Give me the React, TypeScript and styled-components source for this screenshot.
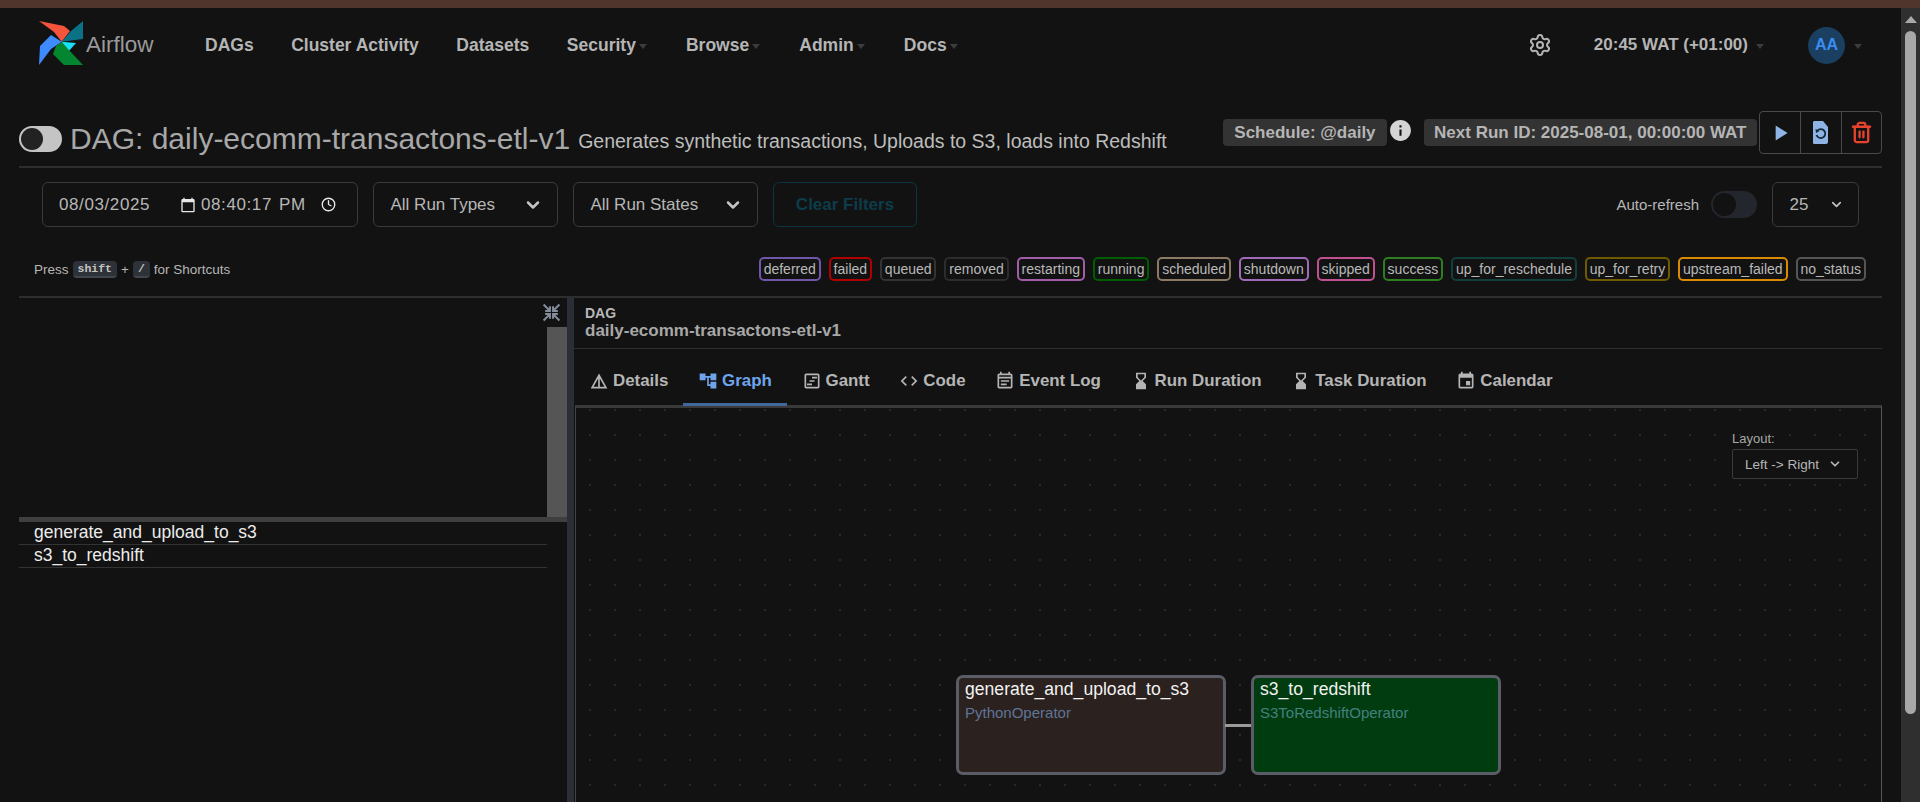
import React from 'react';
import styled, { createGlobalStyle } from 'styled-components';
import { ChevronDown, Clock, Settings, Trash2 } from 'lucide-react';
import {
  MdAccountTree,
  MdCalendarToday,
  MdCode,
  MdDetails,
  MdEvent,
  MdHourglassBottom,
  MdInfo,
  MdOutlineEventNote,
  MdOutlineViewTimeline,
  MdPlayArrow,
} from 'react-icons/md';

const GlobalStyle = createGlobalStyle`
  html, body {
    margin: 0;
    height: 100%;
    overflow: hidden;
    background: #121212;
    color: #b7b7b7;
    font-family: "Liberation Sans", Arial, sans-serif;
  }
  * { box-sizing: border-box; }
`;

const Page = styled.div`
  width: 1920px;
  height: 802px;
  display: flex;
  flex-direction: column;
  overflow: hidden;
`;

const TopStrip = styled.div`
  height: 8px;
  background: #4f352c;
  flex: none;
`;

const Body = styled.div`
  flex: 1;
  display: flex;
  min-height: 0;
`;

const Main = styled.div`
  flex: 1;
  min-width: 0;
  padding: 0 19px;
  display: flex;
  flex-direction: column;
`;

const ScrollRail = styled.div`
  width: 19px;
  flex: none;
  background: #2f2f2f;
  padding-top: 8px;
  display: flex;
  flex-direction: column;
  align-items: center;
`;

const RailArrow = styled.div`
  width: 0;
  height: 0;
  border-left: 6.5px solid transparent;
  border-right: 6.5px solid transparent;
  border-bottom: 7px solid #a8a8a8;
  margin-bottom: 8px;
`;

const RailThumb = styled.div`
  width: 11px;
  height: 683px;
  background: #a8a8a8;
  border-radius: 6px;
`;

const Navbar = styled.nav`
  height: 62px;
  flex: none;
  display: flex;
  align-items: center;
  padding: 12px 0 0 18px;
`;

const Brand = styled.div`
  display: flex;
  align-items: center;
  width: 168px;
  color: #9a9a9a;
  font-size: 22.5px;
`;

const BrandLogo = styled.svg`
  width: 48px;
  height: 48px;
  margin: -4px 1px 0 0;
`;

const NavList = styled.div`
  display: flex;
  align-items: center;
  gap: 37.5px;
`;

const NavItem = styled.span`
  font-size: 17.5px;
  font-weight: 700;
  color: #b5b5b5;
  display: flex;
  align-items: center;
`;

const Caret = styled.i<{ $gap?: number; $after?: number }>`
  display: inline-block;
  width: 0;
  height: 0;
  margin-left: ${(p) => p.$gap ?? 3}px;
  margin-right: ${(p) => p.$after ?? 0}px;
  margin-top: 2px;
  border-left: 4px solid transparent;
  border-right: 4px solid transparent;
  border-top: 5px solid #3c3c3c;
`;

const NavRight = styled.div`
  margin-left: auto;
  display: flex;
  align-items: center;
  color: #b5b5b5;
  padding-right: 20px;
`;

const Clockface = styled.span`
  font-size: 17px;
  font-weight: 700;
  margin-left: 42px;
  display: flex;
  align-items: center;
`;

const Avatar = styled.span`
  width: 37px;
  height: 37px;
  border-radius: 50%;
  background: #1b3f60;
  color: #3b8cf0;
  font-size: 16px;
  font-weight: 700;
  display: flex;
  align-items: center;
  justify-content: center;
  margin-left: 44px;
`;

const TitleRow = styled.div`
  height: 98px;
  flex: none;
  border-bottom: 2px solid #2e2e2e;
  padding: 41px 0 12px;
  display: flex;
  align-items: center;
`;

const TitleBlock = styled.div`
  align-self: flex-end;
  display: flex;
  align-items: center;
  white-space: nowrap;
`;

const PauseToggle = styled.span`
  width: 43px;
  height: 26px;
  border-radius: 13px;
  background: #c4c4c4;
  padding: 2px;
  margin-right: 8px;
  display: flex;
`;

const PauseKnob = styled.span`
  width: 22px;
  height: 22px;
  border-radius: 50%;
  background: #222;
`;

const DagName = styled.h3`
  margin: 0;
  font-size: 30px;
  font-weight: 400;
  line-height: 26px;
  color: #a8a8a8;
`;

const DagDescription = styled.span`
  font-size: 19.5px;
  color: #bdbdbd;
  margin-left: 8px;
  line-height: 26px;
  padding-top: 4px;
`;

const TitleActions = styled.div`
  margin-left: auto;
  display: flex;
  align-items: center;
`;

const InfoBadge = styled.span<{ $pad: number }>`
  height: 27px;
  background: #333;
  border-radius: 4px;
  color: #b5b5b5;
  font-size: 17px;
  font-weight: 700;
  padding: 0 ${(p) => p.$pad}px;
  display: flex;
  align-items: center;
`;

const InfoIcon = styled(MdInfo)`
  width: 25px;
  height: 25px;
  color: #d4d4d4;
  margin: 0 11px 4px 1px;
`;

const ActionGroup = styled.div`
  display: flex;
  height: 43px;
  margin-left: 2px;
  border: 1px solid #4a4a4a;
  border-radius: 4px;
`;

const ActionButton = styled.span<{ $color: string }>`
  width: 40.5px;
  display: flex;
  align-items: center;
  justify-content: center;
  color: ${(p) => p.$color};
  & + & {
    border-left: 1px solid #4a4a4a;
  }
`;

const FilterArea = styled.div`
  height: 130px;
  flex: none;
  padding-top: 14px;
  border-bottom: 2px solid #2e2e2e;
  display: flex;
  flex-direction: column;
`;

const FilterRow = styled.div`
  display: flex;
  align-items: center;
  height: 45px;
  padding-left: 23px;
`;

const FieldBox = styled.div<{ $width: number; $flush?: boolean }>`
  width: ${(p) => p.$width}px;
  height: 45px;
  border: 1px solid #3a3a3a;
  border-radius: 6px;
  font-size: 17px;
  color: #b7b7b7;
  display: flex;
  align-items: center;
  margin-right: ${(p) => (p.$flush ? 0 : 15)}px;
`;

const DateText = styled.span<{ $left: number; $width?: number }>`
  margin-left: ${(p) => p.$left}px;
  ${(p) => (p.$width ? `width: ${p.$width}px;` : '')}
  white-space: pre;
  letter-spacing: 0.6px;
`;

const SelectLabel = styled.span`
  flex: 1;
  padding-left: 16.5px;
`;

const SelectChevron = styled(ChevronDown)`
  width: 20px;
  height: 20px;
  color: #c4c4c4;
  margin-right: 14px;
`;

const SmallChevron = styled(ChevronDown)`
  width: 15px;
  height: 15px;
  color: #c4c4c4;
  margin-right: 14px;
`;

const ClearButton = styled.span`
  width: 144px;
  height: 45px;
  border: 1px solid #0c3440;
  border-radius: 6px;
  color: #0d3c4b;
  font-size: 17px;
  font-weight: 700;
  display: flex;
  align-items: center;
  justify-content: center;
`;

const RefreshArea = styled.div`
  margin-left: auto;
  display: flex;
  align-items: center;
  padding-right: 23px;
`;

const RefreshLabel = styled.span`
  font-size: 15px;
  color: #b7b7b7;
  margin-right: 12px;
`;

const RefreshSwitch = styled.span`
  width: 46px;
  height: 27px;
  border-radius: 14px;
  background: #23272d;
  padding: 2px;
  margin-right: 15px;
  display: flex;
`;

const RefreshKnob = styled.span`
  width: 23px;
  height: 23px;
  border-radius: 50%;
  background: #121212;
`;

const LegendRow = styled.div`
  display: flex;
  align-items: center;
  height: 24px;
  margin-top: 30px;
  padding: 0 16px 0 15px;
`;

const ShortcutHint = styled.div`
  font-size: 13.5px;
  color: #b7b7b7;
  display: flex;
  align-items: center;
  gap: 4px;
`;

const Kbd = styled.kbd`
  font-family: "Liberation Mono", monospace;
  font-size: 11.5px;
  font-weight: 700;
  background: #2d3138;
  color: #c4c4c4;
  border-radius: 4px;
  border-bottom: 2px solid #42464e;
  padding: 1px 5px 0;
  height: 17px;
  display: flex;
  align-items: center;
`;

const BadgeList = styled.div`
  margin-left: auto;
  display: flex;
  gap: 8px;
`;

const StateBadge = styled.span<{ $color: string }>`
  height: 24px;
  border: 2px solid ${(p) => p.$color};
  border-radius: 5px;
  padding: 0 2.9px;
  font-size: 14px;
  color: #b9b9b9;
  display: flex;
  align-items: center;
`;

const Split = styled.div`
  flex: 1;
  min-height: 0;
  display: flex;
`;

const GridPanel = styled.div`
  width: 548px;
  flex: none;
  position: relative;
  display: flex;
  flex-direction: column;
`;

const CollapseIcon = styled.svg`
  position: absolute;
  top: 5px;
  right: 6px;
  width: 19px;
  height: 19px;
  fill: none;
  stroke: #858d9c;
  stroke-width: 2.6;
`;

const GridHead = styled.div`
  height: 219px;
  flex: none;
  padding-top: 29px;
  display: flex;
  justify-content: flex-end;
`;

const GridThumb = styled.div`
  width: 20px;
  background: #555;
`;

const GridBand = styled.div`
  height: 5px;
  flex: none;
  background: #3f3f3f;
`;

const TaskRow = styled.div`
  width: 528px;
  height: 23px;
  border-bottom: 1px solid #333;
  padding-left: 15px;
  font-size: 17.5px;
  line-height: 21px;
  color: #ececec;
`;

const Separator = styled.div`
  width: 7px;
  flex: none;
  background: #2a2e36;
`;

const DetailsPanel = styled.div`
  flex: 1;
  min-width: 0;
  display: flex;
  flex-direction: column;
`;

const DetailsHead = styled.div`
  height: 51px;
  flex: none;
  padding: 8px 0 0 11px;
  border-bottom: 1px solid #2e2e2e;
`;

const HeadLabel = styled.div`
  font-size: 14px;
  font-weight: 700;
  line-height: 14px;
  color: #b9b9b9;
`;

const HeadTitle = styled.div`
  font-size: 17px;
  font-weight: 700;
  line-height: 21px;
  color: #a8a8a8;
`;

const TabBar = styled.div`
  height: 56px;
  flex: none;
  display: flex;
  align-items: stretch;
`;

const Tab = styled.span<{ $active?: boolean }>`
  position: relative;
  z-index: 1;
  display: flex;
  align-items: center;
  gap: 4px;
  padding: 9px 14.7px 0 15px;
  font-size: 16.9px;
  font-weight: 700;
  color: ${(p) => (p.$active ? '#6ea4ec' : '#b5b5b5')};
  border-bottom: 3px solid ${(p) => (p.$active ? '#41689c' : 'transparent')};
  margin-bottom: -1px;
  svg {
    width: 20px;
    height: 20px;
    flex: none;
  }
`;

const GraphCanvas = styled.div`
  flex: 1;
  position: relative;
  margin-left: 1px;
  border-top: 3px solid #3a3a3a;
  border-left: 1px solid #444;
  border-right: 1px solid #555;
  background-color: #121212;
  background-image: radial-gradient(circle, #6a6a6a 0.7px, transparent 1px);
  background-size: 25px 25px;
  background-position: 1.5px -10.5px;
`;

const LayoutPicker = styled.div`
  position: absolute;
  top: 23px;
  right: 23px;
  width: 126px;
  color: #a8a8a8;
  font-size: 13px;
`;

const LayoutSelect = styled.div`
  height: 30px;
  margin-top: 3px;
  border: 1px solid #3a3a3a;
  border-radius: 2px;
  background: #121212;
  display: flex;
  align-items: center;
  justify-content: space-between;
  padding: 0 15px 0 12px;
  font-size: 13.5px;
  color: #b7b7b7;
`;

const TaskNode = styled.div<{ $left: number; $width: number; $fill: string; $muted: string }>`
  position: absolute;
  top: 267px;
  left: ${(p) => p.$left}px;
  width: ${(p) => p.$width}px;
  height: 100px;
  background: ${(p) => p.$fill};
  border: 3px solid #5a5d66;
  border-radius: 7px;
  padding: 1px 6px;
  color: ${(p) => p.$muted};
  font-size: 15px;
`;

const NodeTitle = styled.div`
  color: #f2f2f2;
  font-size: 17.6px;
  line-height: 21px;
  margin-bottom: 4px;
`;

const Edge = styled.div`
  position: absolute;
  top: 316px;
  left: 649px;
  width: 27px;
  height: 3px;
  background: #9a9a9a;
`;

const legend: [string, string][] = [
  ['deferred', '#6f56a8'],
  ['failed', '#b00000'],
  ['queued', '#333333'],
  ['removed', '#2c2c2c'],
  ['restarting', '#a35ca8'],
  ['running', '#005c00'],
  ['scheduled', '#8c7a64'],
  ['shutdown', '#a06ab8'],
  ['skipped', '#c0508f'],
  ['success', '#2e7d20'],
  ['up_for_reschedule', '#103f3c'],
  ['up_for_retry', '#6f5a00'],
  ['upstream_failed', '#d98a00'],
  ['no_status', '#555555'],
];

const tabs: [string, React.ReactNode][] = [
  ['Details', <MdDetails key="i" />],
  ['Graph', <MdAccountTree key="i" />],
  ['Gantt', <MdOutlineViewTimeline key="i" />],
  ['Code', <MdCode key="i" />],
  ['Event Log', <MdOutlineEventNote key="i" />],
  ['Run Duration', <MdHourglassBottom key="i" />],
  ['Task Duration', <MdHourglassBottom key="i" />],
  ['Calendar', <MdEvent key="i" />],
];

const ReparseIcon = () => (
  <svg width="17" height="25" viewBox="0 0 17 25">
    <path d="M2 1h9l5 6v15a2 2 0 0 1-2 2H2a1.500 1.500 0 0 1-1-2V2z" fill="#8db4e4" />
    <path d="M5.500 10.500a4.500 4.500 0 1 1-1 4.500" fill="none" stroke="#16263c" strokeWidth="1.800" />
    <path d="M3.500 9l.5 4 3.500-2z" fill="#16263c" />
  </svg>
);

export default function App() {
  return (
    <Page>
      <GlobalStyle />
      <TopStrip />
      <Body>
        <Main>
          <Navbar>
            <Brand>
              <BrandLogo viewBox="36 20 48 48">
                <path d="M38 22 63 27 69 32 60.700 42.700 53 33z" fill="#f4533c" />
                <path d="M82 22 82 40 60.700 42.700 70 32z" fill="#0b7285" />
                <path d="M60.700 42.700 75 44 67 53z" fill="#19e0f5" />
                <path d="M60.700 42.700 67 50 82 66 63 66 52 55 55 47z" fill="#04852f" />
                <path d="M38 66 39 47 50 36 60.700 42.700 50 50z" fill="#3d8bfd" />
              </BrandLogo>
              Airflow
            </Brand>
            <NavList>
              <NavItem>DAGs</NavItem>
              <NavItem>Cluster Activity</NavItem>
              <NavItem>Datasets</NavItem>
              <NavItem>Security<Caret $after={1.6} /></NavItem>
              <NavItem>Browse<Caret $after={1.6} /></NavItem>
              <NavItem>Admin<Caret $after={1.6} /></NavItem>
              <NavItem>Docs<Caret /></NavItem>
            </NavList>
            <NavRight>
              <Settings size={24} strokeWidth={2} />
              <Clockface>20:45 WAT (+01:00)<Caret $gap={8} /></Clockface>
              <Avatar>AA</Avatar>
              <Caret $gap={9} />
            </NavRight>
          </Navbar>

          <TitleRow>
            <TitleBlock>
              <PauseToggle><PauseKnob /></PauseToggle>
              <DagName>DAG: daily-ecomm-transactons-etl-v1</DagName>
              <DagDescription>Generates synthetic transactions, Uploads to S3, loads into Redshift</DagDescription>
            </TitleBlock>
            <TitleActions>
              <InfoBadge $pad={11.5}>Schedule: @daily</InfoBadge>
              <InfoIcon />
              <InfoBadge $pad={10}>Next Run ID: 2025-08-01, 00:00:00 WAT</InfoBadge>
              <ActionGroup>
                <ActionButton $color="#8db4e4"><MdPlayArrow size={26} /></ActionButton>
                <ActionButton $color="#8db4e4"><ReparseIcon /></ActionButton>
                <ActionButton $color="#e8432d"><Trash2 size={23} strokeWidth={2.400} /></ActionButton>
              </ActionGroup>
            </TitleActions>
          </TitleRow>

          <FilterArea>
            <FilterRow>
              <FieldBox $width={316}>
                <DateText $left={16} $width={121}>08/03/2025</DateText>
                <MdCalendarToday size={16} color="#e8e8e8" />
                <DateText $left={5} $width={78}>08:40:17</DateText>
                <DateText $left={0} $width={42}>PM</DateText>
                <Clock size={15} color="#e8e8e8" strokeWidth={2.200} />
              </FieldBox>
              <FieldBox $width={185}>
                <SelectLabel>All Run Types</SelectLabel>
                <SelectChevron strokeWidth={3} />
              </FieldBox>
              <FieldBox $width={185}>
                <SelectLabel>All Run States</SelectLabel>
                <SelectChevron strokeWidth={3} />
              </FieldBox>
              <ClearButton>Clear Filters</ClearButton>
              <RefreshArea>
                <RefreshLabel>Auto-refresh</RefreshLabel>
                <RefreshSwitch><RefreshKnob /></RefreshSwitch>
                <FieldBox $width={87} $flush>
                  <SelectLabel>25</SelectLabel>
                  <SmallChevron strokeWidth={2.600} />
                </FieldBox>
              </RefreshArea>
            </FilterRow>
            <LegendRow>
              <ShortcutHint>
                Press <Kbd>shift</Kbd> + <Kbd>/</Kbd> for Shortcuts
              </ShortcutHint>
              <BadgeList>
                {legend.map(([name, color]) => (
                  <StateBadge key={name} $color={color}>{name}</StateBadge>
                ))}
              </BadgeList>
            </LegendRow>
          </FilterArea>

          <Split>
            <GridPanel>
              <CollapseIcon viewBox="0 0 24 24">
                <path d="M2 2l7 7M10 4v6H4" />
                <path d="M22 2l-7 7M14 4v6h6" />
                <path d="M2 22l7-7M10 20v-6H4" />
                <path d="M22 22l-7-7M14 20v-6h6" />
              </CollapseIcon>
              <GridHead><GridThumb /></GridHead>
              <GridBand />
              <TaskRow>generate_and_upload_to_s3</TaskRow>
              <TaskRow>s3_to_redshift</TaskRow>
            </GridPanel>
            <Separator />
            <DetailsPanel>
              <DetailsHead>
                <HeadLabel>DAG</HeadLabel>
                <HeadTitle>daily-ecomm-transactons-etl-v1</HeadTitle>
              </DetailsHead>
              <TabBar>
                {tabs.map(([name, icon]) => (
                  <Tab key={name} $active={name === 'Graph'}>{icon}{name}</Tab>
                ))}
              </TabBar>
              <GraphCanvas>
                <LayoutPicker>
                  Layout:
                  <LayoutSelect>
                    Left -&gt; Right
                    <ChevronDown size={14} strokeWidth={3} />
                  </LayoutSelect>
                </LayoutPicker>
                <TaskNode $left={380} $width={270} $fill="#2b211f" $muted="#5f7596">
                  <NodeTitle>generate_and_upload_to_s3</NodeTitle>
                  PythonOperator
                </TaskNode>
                <Edge />
                <TaskNode $left={675} $width={250} $fill="#003c10" $muted="#44807e">
                  <NodeTitle>s3_to_redshift</NodeTitle>
                  S3ToRedshiftOperator
                </TaskNode>
              </GraphCanvas>
            </DetailsPanel>
          </Split>
        </Main>
        <ScrollRail>
          <RailArrow />
          <RailThumb />
        </ScrollRail>
      </Body>
    </Page>
  );
}
